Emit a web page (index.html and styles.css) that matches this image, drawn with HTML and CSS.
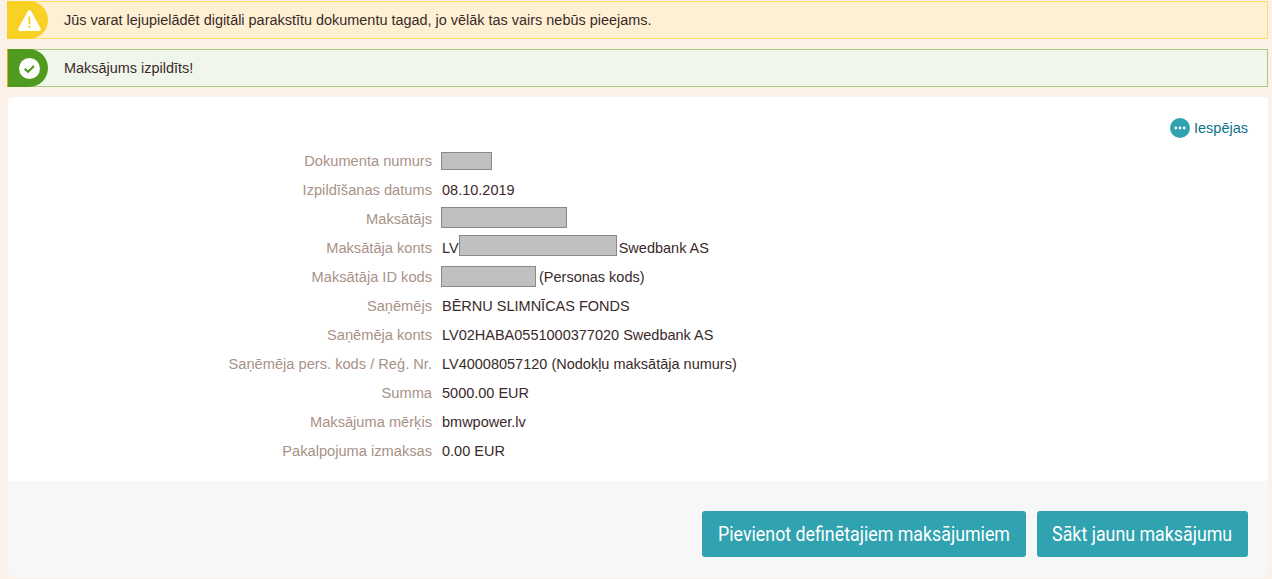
FILE: index.html
```html
<!DOCTYPE html>
<html lang="lv">
<head>
<meta charset="utf-8">
<title>Maksājums izpildīts</title>
<link rel="stylesheet" href="styles.css">
</head>
<body>
<div class="alert alert-warning">
  <div class="alert-icon">
    <svg width="23" height="21" viewBox="0 0 23 21"><path d="M11.500 0c.6 0 1.100.3 1.400.8l9.800 17.700c.6 1.100-.2 2.500-1.500 2.500H1.800C.5 21-.3 19.600.3 18.500L10.100.8c.3-.5.8-.8 1.400-.8z" fill="#fff"/><rect x="10.500" y="6.500" width="1.800" height="8" fill="#f9d024"/><rect x="10.500" y="15.800" width="1.800" height="2.200" fill="#f9d024"/></svg>
  </div>
  <p class="alert-text">Jūs varat lejupielādēt digitāli parakstītu dokumentu tagad, jo vēlāk tas vairs nebūs pieejams.</p>
</div>
<div class="alert alert-success">
  <div class="alert-icon">
    <svg width="21" height="21" viewBox="0 0 21 21"><circle cx="10.500" cy="10.500" r="10.500" fill="#fff"/><path d="M5.700 10.700l3.300 3.100 6-5.800" fill="none" stroke="#4f9a1f" stroke-width="2.200"/></svg>
  </div>
  <p class="alert-text">Maksājums izpildīts!</p>
</div>
<main class="card">
  <section class="card-body">
    <div class="options">
      <a class="options-link" href="#">
        <svg width="20" height="20" viewBox="0 0 20 20"><circle cx="10" cy="10" r="10" fill="#30a2b0"/><circle cx="5.800" cy="10" r="1.400" fill="#fff"/><circle cx="10" cy="10" r="1.400" fill="#fff"/><circle cx="14.200" cy="10" r="1.400" fill="#fff"/></svg>
        <span>Iespējas</span>
      </a>
    </div>
    <dl class="details">
      <div class="row"><dt>Dokumenta numurs</dt><dd><span class="redact r-num"></span></dd></div>
      <div class="row"><dt>Izpildīšanas datums</dt><dd>08.10.2019</dd></div>
      <div class="row"><dt>Maksātājs</dt><dd><span class="redact r-name"></span></dd></div>
      <div class="row"><dt>Maksātāja konts</dt><dd>LV<span class="redact r-acct"></span>Swedbank AS</dd></div>
      <div class="row"><dt>Maksātāja ID kods</dt><dd><span class="redact r-id"></span>(Personas kods)</dd></div>
      <div class="row"><dt>Saņēmējs</dt><dd>BĒRNU SLIMNĪCAS FONDS</dd></div>
      <div class="row"><dt>Saņēmēja konts</dt><dd>LV02HABA0551000377020 Swedbank AS</dd></div>
      <div class="row"><dt>Saņēmēja pers. kods / Reģ. Nr.</dt><dd>LV40008057120 (Nodokļu maksātāja numurs)</dd></div>
      <div class="row"><dt>Summa</dt><dd>5000.00 EUR</dd></div>
      <div class="row"><dt>Maksājuma mērķis</dt><dd>bmwpower.lv</dd></div>
      <div class="row"><dt>Pakalpojuma izmaksas</dt><dd>0.00 EUR</dd></div>
    </dl>
  </section>
  <footer class="card-footer">
    <button class="btn btn-add" type="button"><span class="btn-label">Pievienot definētajiem maksājumiem</span></button>
    <button class="btn btn-new" type="button"><span class="btn-label">Sākt jaunu maksājumu</span></button>
  </footer>
</main>
</body>
</html>
```
FILE: styles.css
```css
* { box-sizing: border-box; }
html, body { height: 100%; }
body {
  margin: 0;
  padding: 1px 4px 1px 7px;
  background: #fbf1e8;
  font-family: "Liberation Sans", Arial, sans-serif;
  font-size: 14.5px;
  color: #3a2a2a;
  overflow: hidden;
}
.alert {
  display: flex;
  align-items: center;
  height: 38px;
  margin-bottom: 10px;
  border: 1px solid;
}
.alert-warning { background: #fef1d3; border-color: #fbdc6c; }
.alert-success { background: #f1f6ea; border-color: #a6cb87; }
.alert-icon {
  display: flex;
  align-items: center;
  justify-content: center;
  width: 41px;
  height: 38px;
  margin: -1px 16px -1px -1px;
  padding-left: 3px;
  border-radius: 0 19px 19px 0;
}
.alert-warning .alert-icon { background: #f9d024; }
.alert-success .alert-icon { background: #4f9a1f; border-left: 1px solid #e0a91c; padding-left: 2px; }
.alert-text { margin: 0; font-size: 14.45px; }
.card {
  margin-left: 1px;
  border-radius: 4px;
  overflow: hidden;
}
.card-body {
  height: 384px;
  padding: 21px 20px 0 0;
  background: #fff;
}
.options { display: flex; justify-content: flex-end; height: 20px; }
.options-link {
  display: flex;
  align-items: center;
  gap: 4px;
  color: #0f7389;
  text-decoration: none;
}
.details { margin: 8px 0 0; }
.row { display: flex; height: 29px; align-items: center; }
dt { width: 424px; text-align: right; color: #a89287; font-size: 14.65px; }
dd { margin: 0 0 0 10px; display: flex; align-items: center; white-space: pre; }
.redact {
  display: block;
  background: #c0c0c0;
  border: 1px solid #888;
}
.r-num { width: 51px; height: 18px; margin-left: -1px; }
.r-name { width: 126px; height: 21px; margin: 0 0 3px -1px; }
.r-acct { width: 158px; height: 21px; margin: 0 2px 5px 0; }
.r-id { width: 95px; height: 21px; margin: 0 3px 1px -1px; }
.card-footer {
  display: flex;
  justify-content: flex-end;
  gap: 11px;
  height: 97px;
  padding: 30px 20px 0 0;
  background: #f7f7f7;
}
.btn {
  display: flex;
  align-items: center;
  justify-content: center;
  height: 46px;
  padding: 0;
  border: 0;
  border-radius: 3px;
  background: #30a2b0;
  color: #fff;
  font-family: "Roboto", sans-serif;
  font-size: 20px;
  cursor: pointer;
}
.btn-add { width: 324px; }
.btn-new { width: 211px; }
.btn-label { flex: none; white-space: nowrap; transform: scaleX(0.89); }
```
